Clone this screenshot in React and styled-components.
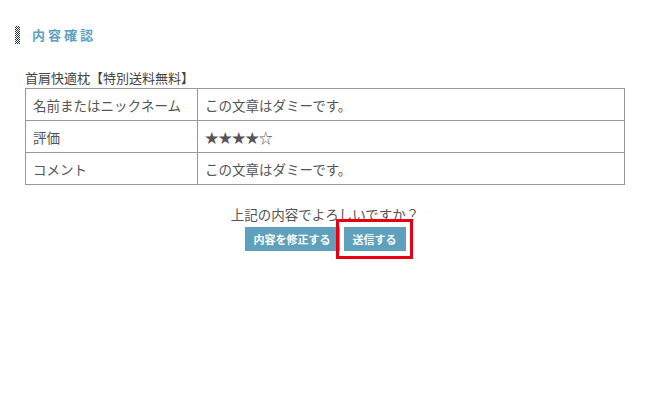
import styled, { createGlobalStyle } from "styled-components";

const GlobalStyle = createGlobalStyle`
body{
    margin: 0;
    background: #fff;
    font-family: "Noto Sans CJK JP", "Noto Sans", sans-serif;
    color: #555;
}
`

const rows = [
    { label: "名前またはニックネーム", value: "この文章はダミーです。" },
    { label: "評価", value: "★★★★☆" },
    { label: "コメント", value: "この文章はダミーです。" },
];

export default function App() {
    return (
        <Page>
            <GlobalStyle />
            <Heading>
                <Bar />
                <h2>内容確認</h2>
            </Heading>

            <Content>
                <Product>首肩快適枕【特別送料無料】</Product>
                <Table>
                    <tbody>
                        {rows.map(row => (
                            <tr key={row.label}>
                                <th>{row.label}</th>
                                <td>{row.value}</td>
                            </tr>
                        ))}
                    </tbody>
                </Table>

                <Confirm>
                    <p>上記の内容でよろしいですか？</p>
                    <Buttons>
                        <Button>内容を修正する</Button>
                        <Highlight>
                            <Button>送信する</Button>
                        </Highlight>
                    </Buttons>
                </Confirm>
            </Content>
        </Page>
    )
}

const Page = styled.div`
width: 650px;
height: 400px;
padding-top: 26px;
box-sizing: border-box;
`
const Heading = styled.div`
display: flex;
align-items: center;
margin-left: 15px;
height: 18px;
h2{
    margin: 0 0 0 12px;
    font-size: 13px;
    font-weight: 700;
    letter-spacing: 3px;
    color: #5f9fbe;
    line-height: 18px;
}
`
const Bar = styled.div`
width: 5px;
height: 18px;
background: repeating-conic-gradient(#1c3558 0 25%, #fff 0 50%) 0 0 / 2px 2px;
`
const Content = styled.div`
margin: 0 25px;
padding-top: 25px;
`
const Product = styled.div`
font-size: 13px;
line-height: 18px;
color: #444;
margin-bottom: 1px;
`
const Table = styled.table`
width: 600px;
border-collapse: collapse;
font-size: 13.5px;
color: #555;
th, td{
    border: 1px solid #999;
    height: 31px;
    padding: 0 0 0 7px;
    text-align: left;
    font-weight: 400;
    vertical-align: middle;
}
th{
    width: 164px;
}
`
const Confirm = styled.div`
display: flex;
flex-direction: column;
align-items: center;
margin-top: 20px;
p{
    margin: 0;
    font-size: 13.5px;
    line-height: 18px;
    color: #555;
}
`
const Buttons = styled.div`
display: flex;
align-items: center;
margin-top: -4px;
margin-left: 7px;
`
const Button = styled.button`
border: none;
background: #5fa0bd;
color: #fff;
font-family: "Noto Sans CJK JP", sans-serif;
font-size: 11px;
font-weight: 700;
height: 24px;
padding: 0 9px;
margin: 0;
cursor: pointer;
`
const Highlight = styled.div`
border: 3px solid #e60012;
padding: 5px 4px 5px 5px;
margin-left: -4px;
display: flex;
`
